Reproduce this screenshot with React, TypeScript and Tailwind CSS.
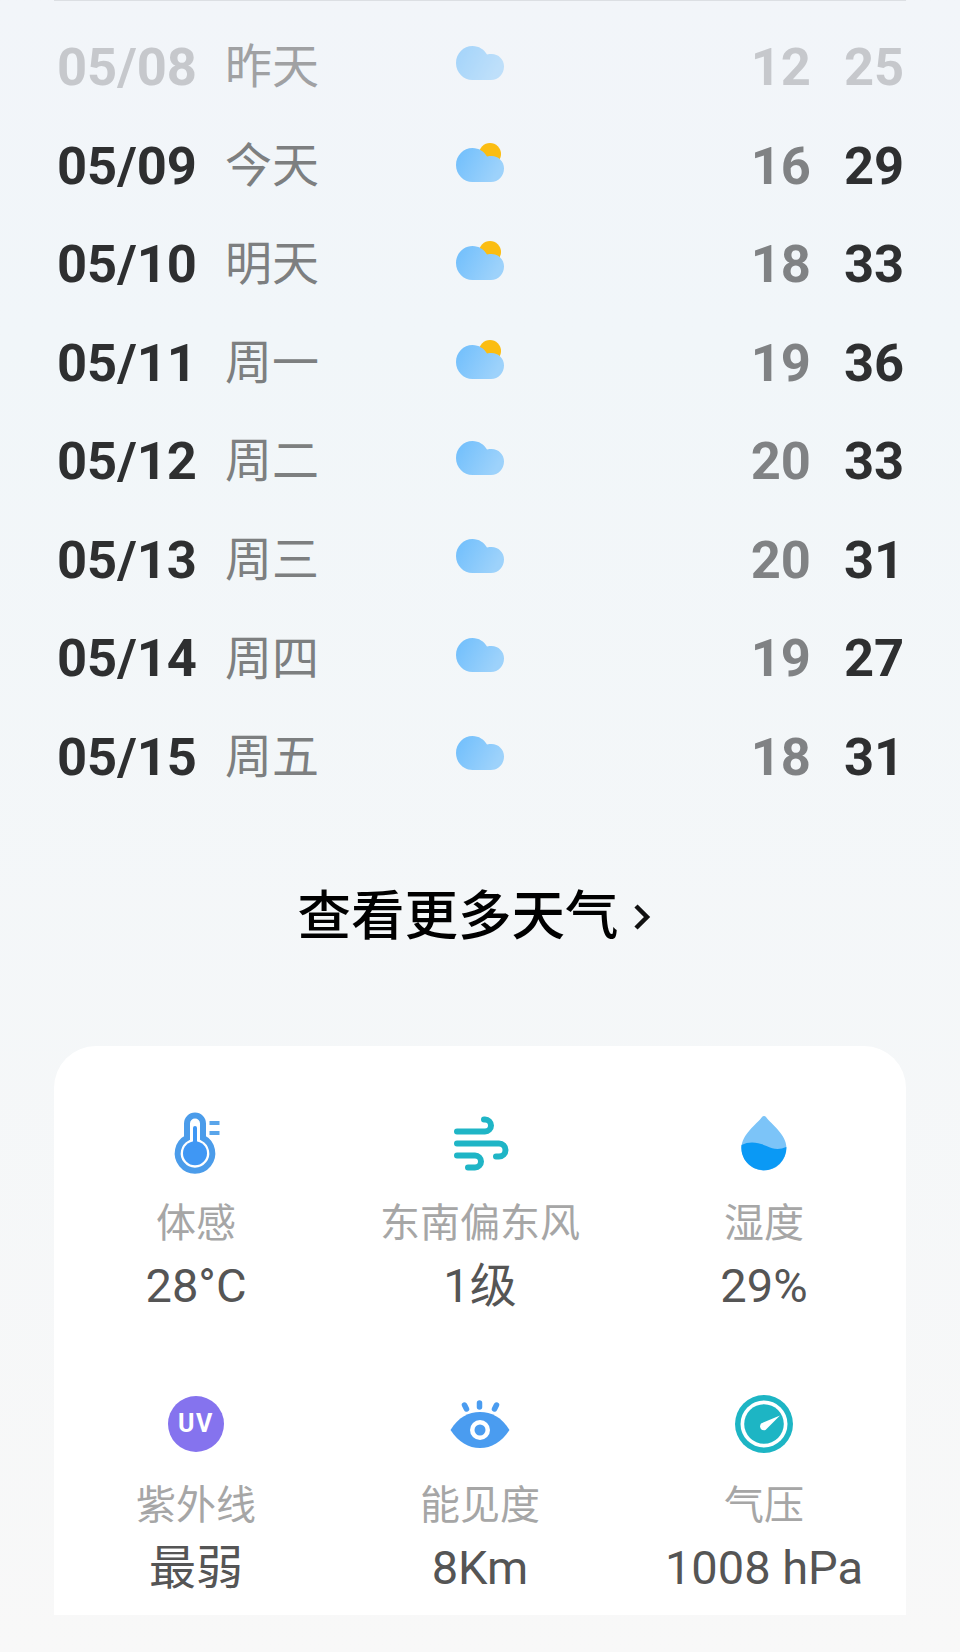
const days = [
  { date: "05/08", day: "昨天", low: 12, high: 25, sun: false, past: true },
  { date: "05/09", day: "今天", low: 16, high: 29, sun: true },
  { date: "05/10", day: "明天", low: 18, high: 33, sun: true },
  { date: "05/11", day: "周一", low: 19, high: 36, sun: true },
  { date: "05/12", day: "周二", low: 20, high: 33, sun: false },
  { date: "05/13", day: "周三", low: 20, high: 31, sun: false },
  { date: "05/14", day: "周四", low: 19, high: 27, sun: false },
  { date: "05/15", day: "周五", low: 18, high: 31, sun: false },
];

const cjk = "font-['Roboto','Noto_Sans_CJK_SC',sans-serif]";

function Cloud({ sun, faded }: { sun: boolean; faded?: boolean }) {
  return (
    <svg
      width="48"
      height="52"
      viewBox="0 -5 48 52"
      className={`${faded ? "opacity-60" : ""} ${sun ? "mt-[6px]" : ""}`}
    >
      <defs>
        <linearGradient id="cloud" x1="0" y1="0" x2="1" y2="0.4">
          <stop offset="0" stopColor="#6fbefc" />
          <stop offset="1" stopColor="#9dd2fb" />
        </linearGradient>
      </defs>
      {sun && <circle cx="34" cy="6" r="11" fill="#fbbd12" />}
      <path
        d="M16.5 0C23 0 28 3.500 31 8.500C33 8 34 8 35.500 8C42.500 8 48 13.500 48 20.500C48 28 42.500 34 35 34H16.500C7.500 34 0 26.500 0 17C0 7.500 7.500 0 16.500 0Z"
        fill="url(#cloud)"
      />
    </svg>
  );
}

function ThermoIcon() {
  return (
    <svg width="70" height="70" viewBox="30.5 18 70 70" fill="none">
      <path
        d="M56.500 48V33.500a8 8 0 0 1 16 0V48a17.300 17.300 0 1 1-16 0Z"
        stroke="#4b9cea"
        strokeWidth="6"
      />
      <circle cx="64.500" cy="63.300" r="12" fill="#3f97f4" />
      <rect x="62.500" y="36" width="4" height="22" rx="2" fill="#3f97f4" />
      <rect x="79" y="31" width="10" height="4" fill="#5aa5ea" />
      <rect x="79" y="41" width="10" height="4" fill="#5aa5ea" />
    </svg>
  );
}

function WindIcon() {
  return (
    <svg width="70" height="70" viewBox="25 16.500 70 70" fill="none" stroke="#1fb5c6" strokeWidth="6" strokeLinecap="round">
      <path d="M37 40H65a6 6 0 0 0 0-12H64" />
      <path d="M37 52H79a6.500 6.500 0 0 1 0 13H76" />
      <path d="M37 64H55a6 6 0 0 1 0 12H48" />
    </svg>
  );
}

function DropIcon() {
  return (
    <svg width="70" height="70" viewBox="19.500 17.500 70 70">
      <path
        d="M52.500 26.500C53.500 25 55.500 25 56.500 26.500C62 34 77 44 77 57.500A22.500 22.500 0 0 1 32 57.500C32 44 47 34 52.500 26.500Z"
        fill="#7cc4f8"
      />
      <path
        d="M32 54.500C40 50 50 52 57 55.500C64 59 70 59.500 76.800 56.500A22.500 22.500 0 1 1 32 54.500Z"
        fill="#0a99f5"
      />
    </svg>
  );
}

function UvIcon() {
  return (
    <div className="flex h-[70px] w-[70px] items-center justify-center">
      <div className="flex h-[56px] w-[56px] items-center justify-center rounded-full bg-[#8573ee] font-['Roboto',sans-serif] text-[25px] font-bold tracking-[1.5px] text-white">
        UV
      </div>
    </div>
  );
}

function EyeIcon() {
  return (
    <svg width="70" height="70" viewBox="24.500 14 70 70">
      <path d="M30 55C38 42 48 37 59.500 37C71 37 81 42 89 55C81 67 71 73 59.500 73C48 73 38 67 30 55Z" fill="#4a9cf0" />
      <circle cx="59.500" cy="55" r="10" fill="#fff" />
      <circle cx="59.500" cy="55" r="5.500" fill="#4a9cf0" />
      <g stroke="#4a9cf0" strokeWidth="5.500" strokeLinecap="round">
        <path d="M44 30L46 34" />
        <path d="M59 28V32" />
        <path d="M76 30L74 34" />
      </g>
    </svg>
  );
}

function GaugeIcon() {
  return (
    <svg width="70" height="70" viewBox="20 17 70 70">
      <circle cx="55" cy="52" r="29" fill="#1db5c4" />
      <circle cx="55" cy="52" r="23.500" fill="#fff" />
      <circle cx="55" cy="52" r="19.800" fill="#1db5c4" />
      <path d="M71 43.500L56.500 58C52.500 59.500 49.500 55.500 52 51.500Z" fill="#fff" />
    </svg>
  );
}

const details = [
  { icon: <ThermoIcon />, label: "体感", value: "28°C", gap: "mt-[21px]" },
  { icon: <WindIcon />, label: "东南偏东风", value: "1级", gap: "mt-[21px]" },
  { icon: <DropIcon />, label: "湿度", value: "29%", gap: "mt-[21px]" },
  { icon: <UvIcon />, label: "紫外线", value: "最弱", gap: "mt-[22px]" },
  { icon: <EyeIcon />, label: "能见度", value: "8Km", gap: "mt-[22px]" },
  { icon: <GaugeIcon />, label: "气压", value: "1008 hPa", gap: "mt-[22px]" },
];

export default function App() {
  return (
    <div className={`h-[1652px] w-[960px] overflow-hidden bg-gradient-to-b from-[#f2f5f9] via-[#f1f6f9] via-20% to-[#f8f8f8] ${cjk}`}>
      <div className="mx-[54px] h-px bg-[#dcdfe3]" />

      {/* Forecast */}
      <div className="mt-[17px]">
        {days.map((d) => (
          <div key={d.date} className="flex h-[98.6px] items-center pl-[57px]">
            <span className={`w-[168px] text-[52.5px] font-bold ${d.past ? "text-[#c6c8cc]" : "text-[#2e2f30]"}`}>
              {d.date}
            </span>
            <span className={`w-[231px] text-[47px] ${d.past ? "text-[#a0a1a3]" : "text-[#7d7f80]"}`}>{d.day}</span>
            <Cloud sun={d.sun} faded={d.past} />
            <span className={`w-[307px] text-right text-[52.5px] font-bold ${d.past ? "text-[#c6c8cc]" : "text-[#808284]"}`}>
              {d.low}
            </span>
            <span className={`ml-[33px] text-[52.5px] font-bold ${d.past ? "text-[#c6c8cc]" : "text-[#2e2f30]"}`}>
              {d.high}
            </span>
          </div>
        ))}
      </div>

      {/* More link */}
      <div className="mt-[70px] flex h-[80px] items-center justify-center gap-[14px] pr-[12px] text-[53.5px] font-medium text-black">
        <span>查看更多天气</span>
        <svg width="18" height="30" viewBox="0 0 18 30" fill="none" stroke="#111" strokeWidth="4.500">
          <path d="M3 4L14 15L3 26" />
        </svg>
      </div>

      {/* Details card */}
      <div className="mx-[54px] mt-[89px] grid h-[569px] grid-cols-3 gap-y-[56px] rounded-t-[42px] bg-white pt-[62px]">
        {details.map((item) => (
          <div key={item.label} className="flex flex-col items-center">
            {item.icon}
            <div className={`${item.gap} text-[40px] leading-[50px] text-[#a6a6a6]`}>{item.label}</div>
            <div className="mt-[7px] text-[47px] leading-[60px] text-[#555555]">{item.value}</div>
          </div>
        ))}
      </div>
    </div>
  );
}
